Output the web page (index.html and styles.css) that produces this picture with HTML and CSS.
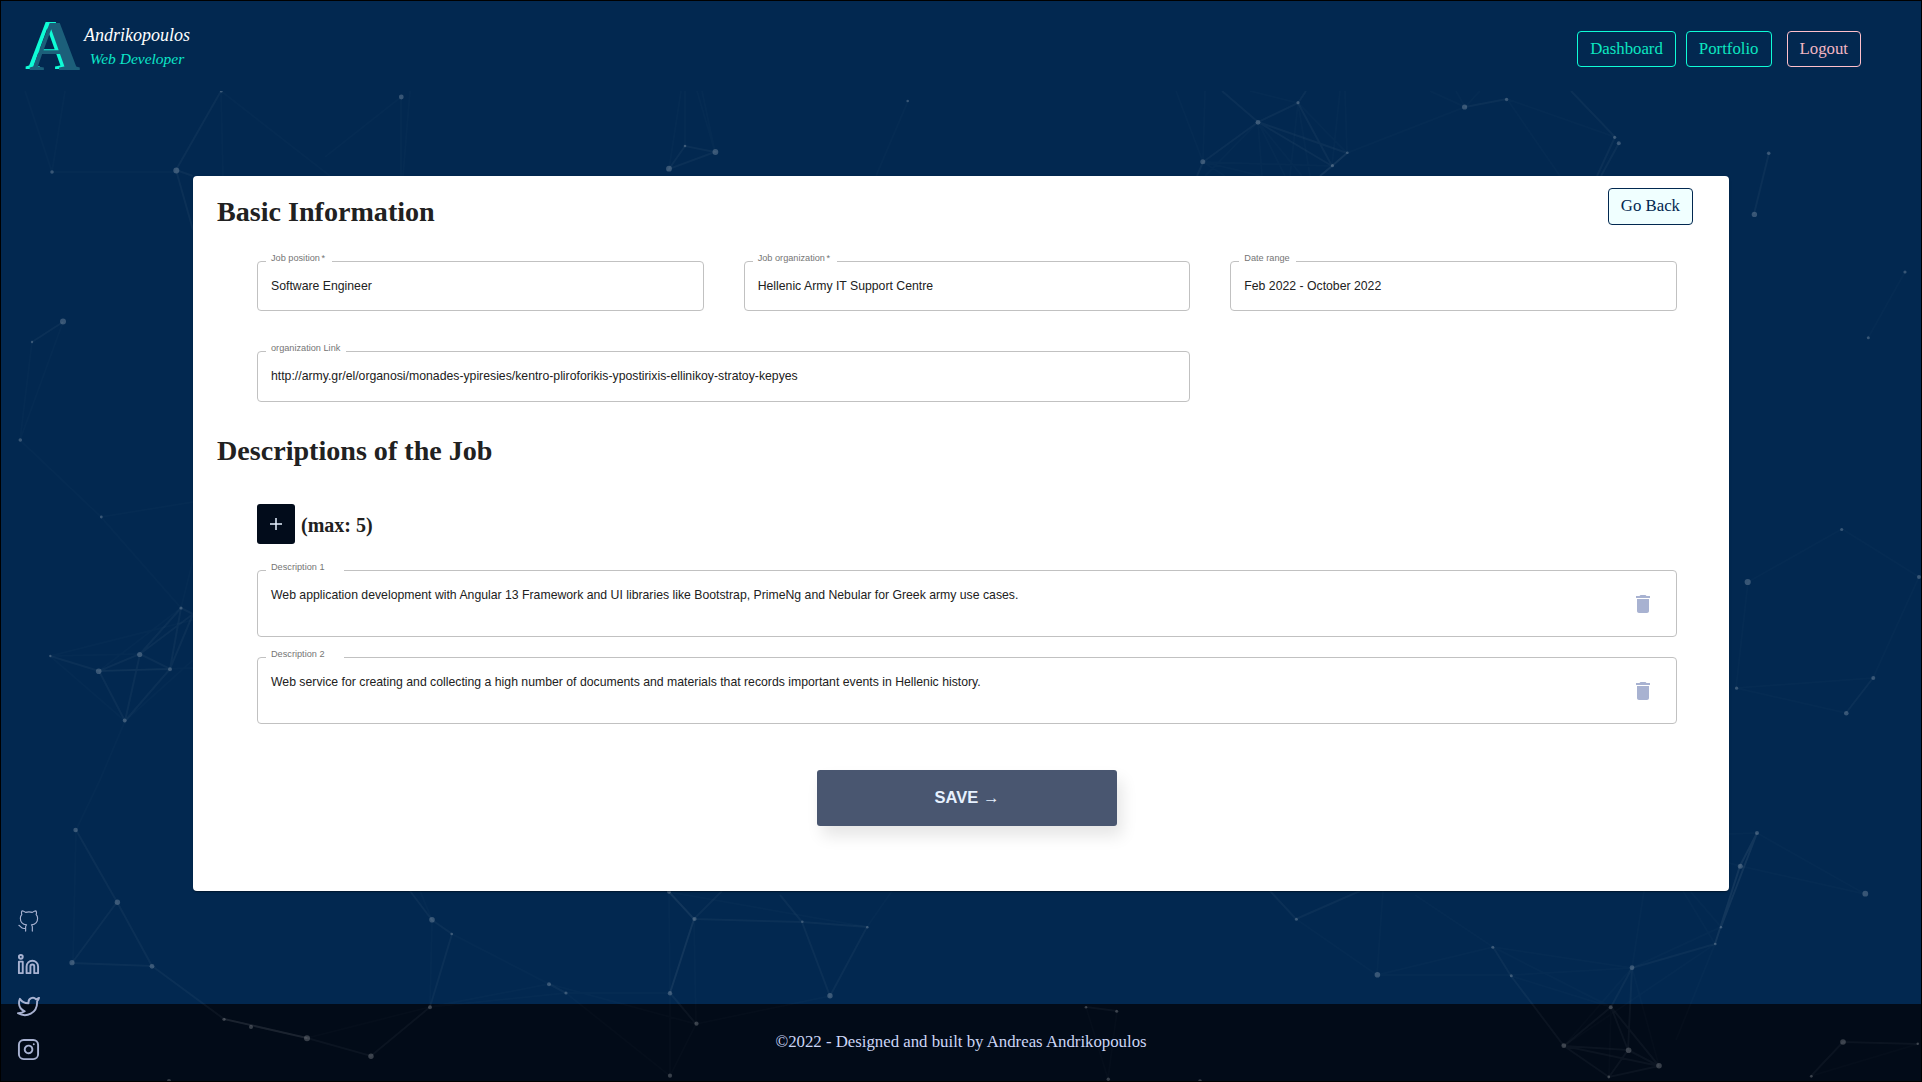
FILE: index.html
```html
<!DOCTYPE html>
<html lang="en">
<head>
<meta charset="utf-8">
<title>Andrikopoulos - Web Developer</title>
<link rel="stylesheet" href="styles.css">
</head>
<body>
<div class="page">
  <header class="header">
    <a class="brand">
      <span class="brand-mark">A</span>
      <span class="brand-text"><span class="brand-name">Andrikopoulos</span><span class="brand-role">Web Developer</span></span>
    </a>
    <nav class="nav">
      <a class="btn">Dashboard</a>
      <a class="btn">Portfolio</a>
      <a class="btn btn-logout">Logout</a>
    </nav>
  </header>

  <svg class="particles" viewBox="1 91 1920 990" width="1920" height="990">
    <path class="link faint" d="M52 172L25 91M52 172L65 91M52 172H176M221 91L223 176M221 91L330 176M63 322L20 440M32 342L20 440L101 517L193 502M101 517L181 608M181 608L193 560M50 656L193 620M50 656L140 654M50 656L125 721M99 671L193 668M99 671L181 608M125 721L193 660M125 721L100 780L76 830M401 97L325 157M401 97V176M410 91L403 176M669 169L681 91M685 146V91M715 152L697 91M715 152L702 91M908 101L876 176M1203 162L1176 91M1203 162L1205 91M1258 122L1205 176M1258 122L1262 176M1258 122L1285 176M1258 122L1302 176M1298 103L1290 176M1298 103L1310 176M1298 103L1250 91M1347 153L1298 103M1347 153L1345 91M1332 166L1340 91M1203 162L1332 166M1203 162L1225 176M1203 162L1262 176M1347 153L1465 107M1465 107L1430 91M1465 107L1456 91M1465 107L1480 91M1507 99L1615 137M1507 99L1560 176M1905 272L1868 338M1748 582L1736 688L1873 678L1919 577L1842 529L1748 582M1736 688L1846 713M76 830L73 963M430 1007L432 920M307 1038L430 1007L549 984M452 934L549 984M566 993L670 993M549 984L696 1024M430 1007L566 993M566 993L670 1076M669 892L670 993V1076M669 892L867 927M867 927L892 891M696 1024L830 996M432 920L420 891M694 919L696 1024L670 1076M1296 919L1377 975L1383 891M1377 975L1493 947L1632 968M1377 975H1511L1632 968M1415 895L1493 947M1511 976L1611 1007M1493 947L1611 1007M1632 968L1644 891M1715 944L1683 891M1721 927L1690 891M1721 927L1632 968M1715 944L1564 1046M1715 944L1676 1040M1757 833L1865 894L1740 866L1729 863M1729 834L1757 833M1632 968L1564 1046M1632 968L1659 1066M1611 1007L1609 1077M1811 1076L1918 1044M1086 1007L1108 1079L1117 1011"/>
    <path class="link" d="M176 170L221 91M176 170L193 176M176 170L193 230M63 322L32 342M181 608L193 614L140 654L99 671L125 721L140 654L170 669L193 614M181 608L140 654M181 608L170 669L125 721M50 656L99 671L170 669M669 169L685 146L715 152ZM1203 162L1258 122L1298 103L1306 91M1203 162L1197 176M1258 122L1222 91M1258 122L1332 166M1258 122L1347 153M1298 103L1332 166M1465 107L1507 99M1615 137L1571 91M1615 137L1597 176M1619 143L1601 176M1769 153L1754 214M1873 678L1846 713M76 830L117 902L72 963L152 966L117 902M152 966L224 1019L307 1038L371 1056L430 1007L452 934L432 920L410 891M549 984L566 993M670 993L696 1024M694 919L802 922L867 927L830 996L802 922L780 895M694 919L722 891M1296 919L1270 891M1296 919L1360 891M1493 947L1511 976L1564 1046L1611 1007L1632 968L1628 1050L1564 1046L1609 1077L1659 1066L1564 1046M1609 1077L1628 1050L1611 1007L1659 1066L1628 1050M1632 968L1715 944M1811 1076L1843 1042L1918 1044M1086 1007L1117 1011"/>
    <path class="link strong" d="M1347 153L1332 166L1320 176M669 892L694 919L670 993M1757 833L1740 866L1715 944M1757 833L1721 927M224 1019L307 1038"/>
    <g class="dots">
      <circle cx="52" cy="172" r="1.8"/><circle cx="176.3" cy="170.5" r="3"/><circle cx="221.3" cy="91" r="1.5"/><circle cx="401.3" cy="97" r="2.4"/><circle cx="63" cy="321.6" r="3"/><circle cx="32" cy="342" r="1.2"/><circle cx="20.3" cy="440" r="1.8"/><circle cx="101.3" cy="517" r="1.4"/><circle cx="181" cy="608" r="1.6"/><circle cx="139.7" cy="654.5" r="2.6"/><circle cx="98.7" cy="671.3" r="2.8"/><circle cx="170" cy="669.2" r="2"/><circle cx="50.3" cy="656" r="1.2"/><circle cx="124.7" cy="720.6" r="2"/>
      <circle cx="75.6" cy="830" r="2.3"/><circle cx="117.4" cy="902.3" r="2.7"/><circle cx="72" cy="962.7" r="2.6"/><circle cx="152" cy="966.3" r="2.4"/><circle cx="224" cy="1019.3" r="1.6"/><circle cx="251" cy="1027" r="2"/><circle cx="307" cy="1038.3" r="3"/><circle cx="371" cy="1056.3" r="2.7"/><circle cx="430" cy="1007.3" r="2"/><circle cx="432" cy="919.7" r="2.8"/><circle cx="451.7" cy="934" r="1.3"/><circle cx="549" cy="984.3" r="2"/><circle cx="566" cy="993" r="1.6"/><circle cx="670" cy="993.3" r="2.2"/><circle cx="694.5" cy="919" r="2.1"/><circle cx="696.5" cy="1023.7" r="2.1"/><circle cx="670" cy="1075.7" r="2.1"/><circle cx="669" cy="891.7" r="2"/><circle cx="169" cy="1081" r="2"/>
      <circle cx="802.3" cy="921.8" r="1.3"/><circle cx="867.3" cy="927.3" r="1.3"/><circle cx="830" cy="995.7" r="2.7"/><circle cx="1086" cy="1007.3" r="1.3"/><circle cx="1116.7" cy="1011.3" r="1.5"/><circle cx="1108.3" cy="1079.3" r="1.7"/><circle cx="1200" cy="1081" r="1.8"/>
      <circle cx="1296.4" cy="919.3" r="1.5"/><circle cx="1377.4" cy="974.7" r="2.8"/><circle cx="1492.8" cy="947.3" r="1.5"/><circle cx="1511.3" cy="975.7" r="1.5"/><circle cx="1632" cy="967.7" r="2.4"/><circle cx="1610.7" cy="1007.3" r="2"/><circle cx="1563.8" cy="1045.7" r="2.4"/><circle cx="1628.6" cy="1050.3" r="2.8"/><circle cx="1659" cy="1065.7" r="2.8"/><circle cx="1608.8" cy="1077" r="1.4"/><circle cx="1715.3" cy="944" r="1.3"/><circle cx="1721" cy="927.3" r="1.2"/><circle cx="1740.3" cy="866.3" r="2.5"/><circle cx="1757" cy="833" r="2"/><circle cx="1865.3" cy="893.7" r="2.9"/><circle cx="1843" cy="1042" r="2.8"/><circle cx="1917.8" cy="1043.7" r="1.3"/><circle cx="1811.3" cy="1076.3" r="1.4"/>
      <circle cx="685" cy="146" r="1.3"/><circle cx="715.4" cy="152" r="2.9"/><circle cx="669" cy="168.7" r="2.9"/><circle cx="907.7" cy="101" r="1.3"/><circle cx="1258" cy="122.3" r="2.4"/><circle cx="1298" cy="102.7" r="1.6"/><circle cx="1202.8" cy="161.7" r="2.5"/><circle cx="1347.4" cy="152.7" r="1.3"/><circle cx="1332.5" cy="165.7" r="1.6"/><circle cx="1464.6" cy="107" r="2.6"/><circle cx="1506.6" cy="99.5" r="1.7"/><circle cx="1614.7" cy="137.3" r="1.6"/><circle cx="1618.8" cy="143.3" r="2"/><circle cx="1768.7" cy="153.3" r="1.8"/><circle cx="1754.4" cy="214.4" r="2.7"/>
      <circle cx="1905" cy="272" r="1.6"/><circle cx="1868.3" cy="337.7" r="1.5"/><circle cx="1841.7" cy="529.5" r="1.6"/><circle cx="1747.7" cy="582" r="3.1"/><circle cx="1919" cy="577" r="2"/><circle cx="1736.6" cy="688.2" r="1.6"/><circle cx="1873.3" cy="678" r="2"/><circle cx="1846.3" cy="713.2" r="2.3"/>
    </g>
  </svg>

  <main class="main">
    <section class="card">
      <div class="card-head">
        <h2 class="title">Basic Information</h2>
        <a class="btn btn-back">Go Back</a>
      </div>
      <div class="grid">
        <div class="field"><span class="label">Job position<span class="required"> *</span></span>Software Engineer</div>
        <div class="field"><span class="label">Job organization<span class="required"> *</span></span>Hellenic Army IT Support Centre</div>
        <div class="field"><span class="label">Date range</span>Feb 2022 - October 2022</div>
        <div class="field wide"><span class="label">organization Link</span>http://army.gr/el/organosi/monades-ypiresies/kentro-pliroforikis-ypostirixis-ellinikoy-stratoy-kepyes</div>
      </div>
      <h2 class="title">Descriptions of the Job</h2>
      <div class="adder">
        <button class="add" type="button"><svg width="12" height="12" viewBox="0 0 12 12"><path d="M6 0V12M0 6H12" fill="none" stroke="#e6f1ff" stroke-width="1.5"/></svg></button>
        <span class="max">(max: 5)</span>
      </div>
      <div class="list">
        <div class="field area"><span class="label">Description 1</span>Web application development with Angular 13 Framework and UI libraries like Bootstrap, PrimeNg and Nebular for Greek army use cases.
          <svg class="trash" width="24" height="24" viewBox="0 0 24 24"><path d="M6 19c0 1.100.9 2 2 2h8c1.100 0 2-.9 2-2V7H6v12zM19 4h-3.500l-1-1h-5l-1 1H5v2h14V4z"/></svg></div>
        <div class="field area"><span class="label">Description 2</span>Web service for creating and collecting a high number of documents and materials that records important events in Hellenic history.
          <svg class="trash" width="24" height="24" viewBox="0 0 24 24"><path d="M6 19c0 1.100.9 2 2 2h8c1.100 0 2-.9 2-2V7H6v12zM19 4h-3.500l-1-1h-5l-1 1H5v2h14V4z"/></svg></div>
      </div>
      <button class="save" type="button">SAVE →</button>
    </section>
  </main>

  <footer class="footer">©2022 - Designed and built by Andreas Andrikopoulos</footer>

  <div class="social">
    <svg class="thin" viewBox="0 0 24 24"><path d="M9 19c-5 1.500-5-2.500-7-3m14 6v-3.870a3.370 3.370 0 0 0-.94-2.610c3.140-.35 6.440-1.540 6.440-7A5.440 5.440 0 0 0 20 4.770 5.070 5.070 0 0 0 19.910 1S18.730.65 16 2.480a13.380 13.380 0 0 0-7 0C6.270.65 5.090 1 5.090 1A5.070 5.070 0 0 0 5 4.770a5.440 5.440 0 0 0-1.500 3.780c0 5.420 3.300 6.610 6.440 7A3.370 3.370 0 0 0 9 18.130V22"/></svg>
    <svg viewBox="0 0 24 24"><path d="M16 8a6 6 0 0 1 6 6v7h-4v-7a2 2 0 0 0-4 0v7h-4v-7a6 6 0 0 1 6-6zM2 9h4v12H2z"/><circle cx="4" cy="4" r="2"/></svg>
    <svg viewBox="0 0 24 24"><path d="M23 3a10.900 10.900 0 0 1-3.140 1.530 4.480 4.480 0 0 0-7.860 3v1A10.660 10.660 0 0 1 3 4s-4 9 5 13a11.640 11.640 0 0 1-7 2c9 5 20 0 20-11.500a4.500 4.500 0 0 0-.08-.83A7.720 7.720 0 0 0 23 3z"/></svg>
    <svg viewBox="0 0 24 24"><rect x="2" y="2" width="20" height="20" rx="5"/><path d="M16 11.370A4 4 0 1 1 12.630 8 4 4 0 0 1 16 11.370zM17.500 6.500h.01"/></svg>
  </div>
</div>
</body>
</html>
```
FILE: styles.css
```css
* { box-sizing: border-box; }

body {
  margin: 0;
  font-family: "Liberation Serif", serif;
  font-size: 16.8px;
  background: #000;
}

.page {
  position: relative;
  display: flex;
  flex-direction: column;
  width: 1922px;
  height: 1082px;
  overflow: hidden;
  border: 1px solid #000;
  background: #022850;
}

.header {
  display: flex;
  justify-content: space-between;
  height: 90px;
  flex: none;
  padding: 0 60px 0 28px;
}

.brand { display: flex; }

.brand-mark {
  width: 54px;
  padding-top: 5px;
  color: #1c5f7a;
  font-size: 71px;
  font-weight: bold;
  line-height: 80px;
  text-shadow: -4px -1px 0 #0ffcd6;
}

.brand-text {
  display: flex;
  flex-direction: column;
  width: 108px;
  padding-top: 23px;
  text-align: center;
  font-style: italic;
}

.brand-name { color: #fff; font-size: 18px; line-height: 22px; }
.brand-role { color: #0ce6c8; font-size: 15.5px; line-height: 22px; padding-top: 2px; }

.nav { display: flex; gap: 10px; padding-top: 30px; }

.btn {
  height: 36px;
  padding: 0 12px;
  border: 1px solid #0ffcd6;
  border-radius: 4px;
  color: #0ce6c0;
  line-height: 34px;
}

.btn-logout { margin-left: 5px; border-color: #ffc0cb; color: #f2b6c2; }

.particles { position: absolute; left: 0; top: 90px; z-index: 1; }
.link { fill: none; stroke: #fff; stroke-width: 2; stroke-opacity: .038; }
.faint { stroke-opacity: .017; }
.strong { stroke-opacity: .065; }
.dots { fill: #fff; fill-opacity: .21; }

.main {
  position: relative;
  z-index: 2;
  flex: none;
  display: flex;
  justify-content: center;
  height: 913px;
  padding-top: 85px;
}

.card {
  display: flex;
  flex-direction: column;
  width: 1536px;
  height: 715px;
  padding: 12px 24px 0;
  border-radius: 4px;
  background: #fff;
  color: #212121;
  box-shadow: 0 2px 1px -1px rgba(0,0,0,.2), 0 1px 1px rgba(0,0,0,.14), 0 1px 3px rgba(0,0,0,.12);
}

.card-head { display: flex; justify-content: space-between; height: 73px; }

.title { margin: 0; padding-top: 8px; height: 40px; font-size: 28.1px; line-height: 32px; }

.btn-back {
  height: 37px;
  margin-right: 12px;
  border-color: #022850;
  background: #f0ffff;
  color: #022850;
}

.grid {
  display: grid;
  grid-template-columns: repeat(3, 1fr);
  gap: 40px;
  margin: 0 28px 25px 40px;
}

.field {
  position: relative;
  height: 50px;
  padding: 16px 13px;
  border: 1px solid #c1c1c1;
  border-radius: 4px;
  font: 12.25px/16px "Liberation Sans", sans-serif;
}

.wide { grid-column: span 2; height: 51px; }

.label {
  position: absolute;
  left: 8px;
  top: -10px;
  padding: 0 6px 0 5px;
  background: #fff;
  color: #757575;
  font-size: 9.19px;
  line-height: 12px;
}

.required { word-spacing: -1px; margin-right: 1px; }

.adder { display: flex; gap: 6px; margin: 37px 0 0 40px; }

.add {
  display: flex;
  align-items: center;
  justify-content: center;
  width: 38px;
  height: 40px;
  padding: 0;
  border: 0;
  border-radius: 3px;
  background: #020c1b;
}

.max { font-size: 20px; font-weight: bold; line-height: 43px; }

.list { display: flex; flex-direction: column; gap: 20px; margin: 23px 28px 0 40px; }

.area { height: 67px; }
.area .label { width: 78px; }

.trash { position: absolute; right: 21px; top: 21px; fill: #a8b2d1; }

.save {
  align-self: center;
  width: 300px;
  height: 56px;
  margin: 46px 0 0 12px;
  padding: 0 0 2px;
  border: 0;
  border-radius: 3px;
  background: #495670;
  color: #e6f1ff;
  font: bold 16.5px "Liberation Sans", sans-serif;
  box-shadow: 5px 10px 16px rgba(0,0,0,.1);
}

.footer {
  flex: 1;
  background: #020b18;
  color: #ccd6f6;
  text-align: center;
  line-height: 75px;
}

.social {
  position: absolute;
  z-index: 3;
  left: 16px;
  top: 909px;
  display: flex;
  flex-direction: column;
  gap: 19.5px;
}

.social svg {
  width: 23px;
  height: 23px;
  fill: none;
  stroke: #a8b2d1;
  stroke-width: 2;
  stroke-linecap: round;
  stroke-linejoin: round;
}

.social .thin { stroke-width: 1.2; }
```
